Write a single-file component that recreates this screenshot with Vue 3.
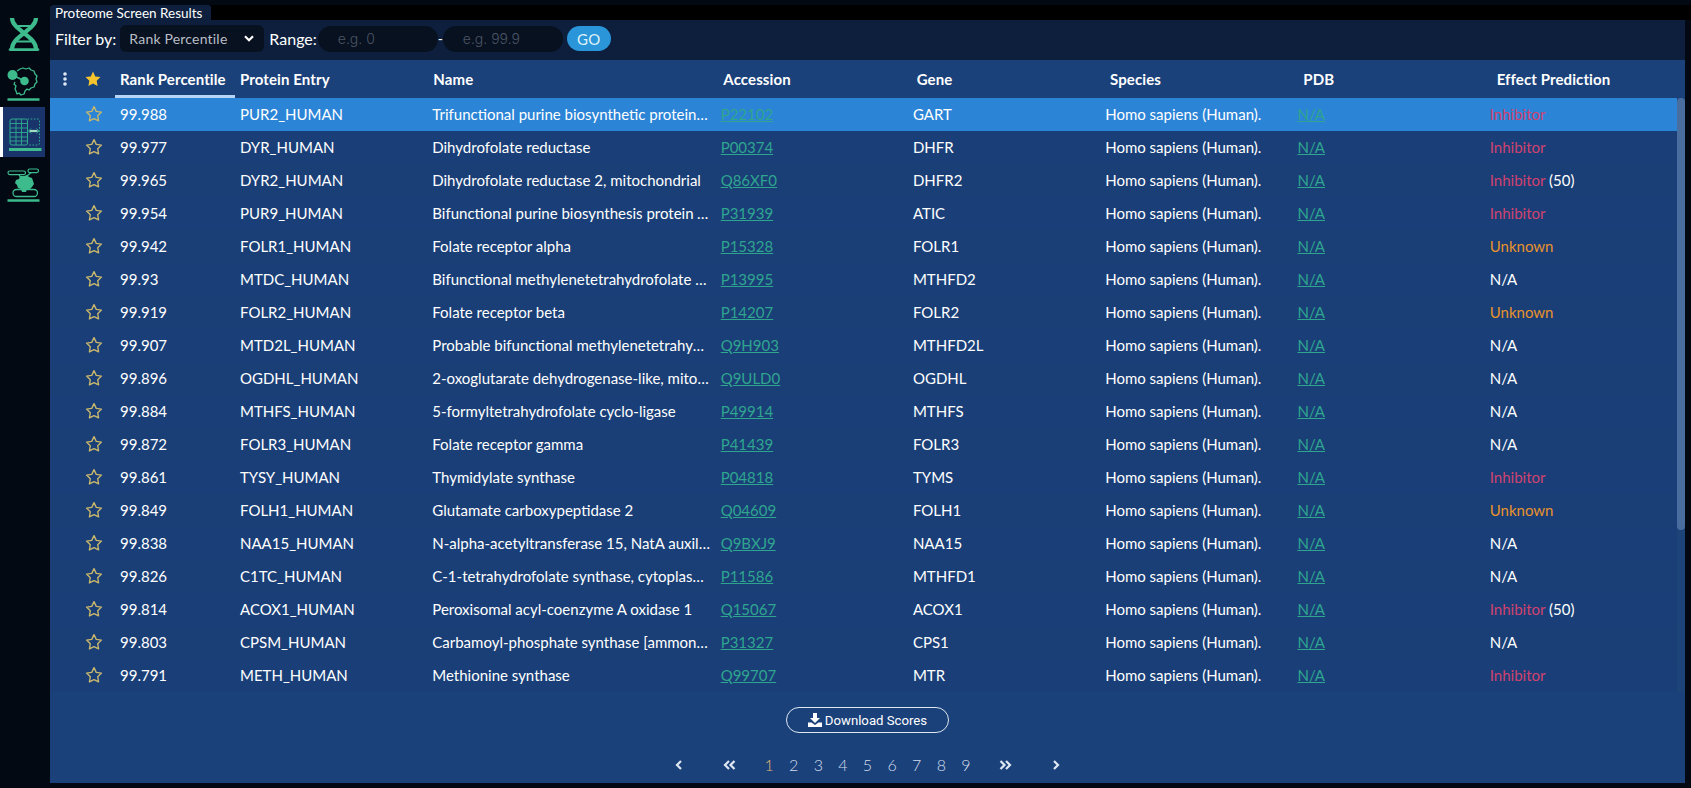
<script setup>
const rows = [
  ['99.988','PUR2_HUMAN','Trifunctional purine biosynthetic protein adenosine-3','P22102','GART','Inhibitor',''],
  ['99.977','DYR_HUMAN','Dihydrofolate reductase','P00374','DHFR','Inhibitor',''],
  ['99.965','DYR2_HUMAN','Dihydrofolate reductase 2, mitochondrial','Q86XF0','DHFR2','Inhibitor','(50)'],
  ['99.954','PUR9_HUMAN','Bifunctional purine biosynthesis protein ATIC','P31939','ATIC','Inhibitor',''],
  ['99.942','FOLR1_HUMAN','Folate receptor alpha','P15328','FOLR1','Unknown',''],
  ['99.93','MTDC_HUMAN','Bifunctional methylenetetrahydrofolate dehydrogenase','P13995','MTHFD2','N/A',''],
  ['99.919','FOLR2_HUMAN','Folate receptor beta','P14207','FOLR2','Unknown',''],
  ['99.907','MTD2L_HUMAN','Probable bifunctional methylenetetrahydrofolate dehydrogenase','Q9H903','MTHFD2L','N/A',''],
  ['99.896','OGDHL_HUMAN','2-oxoglutarate dehydrogenase-like, mitochondrial','Q9ULD0','OGDHL','N/A',''],
  ['99.884','MTHFS_HUMAN','5-formyltetrahydrofolate cyclo-ligase','P49914','MTHFS','N/A',''],
  ['99.872','FOLR3_HUMAN','Folate receptor gamma','P41439','FOLR3','N/A',''],
  ['99.861','TYSY_HUMAN','Thymidylate synthase','P04818','TYMS','Inhibitor',''],
  ['99.849','FOLH1_HUMAN','Glutamate carboxypeptidase 2','Q04609','FOLH1','Unknown',''],
  ['99.838','NAA15_HUMAN','N-alpha-acetyltransferase 15, NatA auxiliary subunit','Q9BXJ9','NAA15','N/A',''],
  ['99.826','C1TC_HUMAN','C-1-tetrahydrofolate synthase, cytoplasmic','P11586','MTHFD1','N/A',''],
  ['99.814','ACOX1_HUMAN','Peroxisomal acyl-coenzyme A oxidase 1','Q15067','ACOX1','Inhibitor','(50)'],
  ['99.803','CPSM_HUMAN','Carbamoyl-phosphate synthase [ammonia], mitochondrial','P31327','CPS1','N/A',''],
  ['99.791','METH_HUMAN','Methionine synthase','Q99707','MTR','Inhibitor',''],
]
const headers = ['Protein Entry','Name','Accession','Gene','Species','PDB','Effect Prediction']
const pages = [1,2,3,4,5,6,7,8,9]
const starPath = 'M10 1.8l2.5 5.3 5.8.8-4.2 4 1 5.8L10 15.1l-5.1 2.6 1-5.8-4.2-4 5.8-.8z'
const blob = 'M11 6l3-2 3-1 3 1 3-1 2 2 3 1 1 3 2 2-1 3 1 3-2 2-1 3-3 1-2 2-2-1-2 2-1 3-3 1-2-2-2 1-1-3-1-2 1-3-2-2 1-2'
const effectClass = e => e === 'Inhibitor' ? 'inhibitor' : e === 'Unknown' ? 'unknown' : ''
</script>

<template>
  <div class="app">
    <nav class="side">
      <div class="nav-item">
        <svg width="32" height="34" viewBox="0 0 32 34" fill="none" stroke="#3dbb8d">
          <path d="M4 1C4 13 28 19 28 32M28 1C28 13 4 19 4 32" stroke-width="4.2"/>
          <path d="M9 9h14M9 24.500h14" stroke-width="2.200"/>
          <path d="M2 32.600h28" stroke-width="2.600" stroke-linecap="round"/>
        </svg>
      </div>
      <div class="nav-item">
        <svg width="36" height="36" viewBox="0 0 36 36" fill="none" stroke="#3dbb8d" stroke-linejoin="round">
          <path :d="blob" stroke-width="1.3"/>
          <path d="M6.500 10l12 6" stroke-width="1.600"/>
          <circle cx="6.500" cy="10" r="5" fill="#3dbb8d" stroke="none"/>
          <circle cx="18.500" cy="16" r="4.300" fill="#3dbb8d" stroke="none"/>
          <path d="M1.500 34.500h32" stroke-width="2.600"/>
        </svg>
      </div>
      <div class="nav-item active">
        <svg width="34" height="38" viewBox="0 0 34 38" fill="none" stroke="#2fa98f">
          <rect x="1" y="6" width="17.500" height="26" rx="2" stroke-width="1"/>
          <path d="M1 10.500h17.500M1 15h17.500M1 19.500h17.500M1 24h17.500M1 28h17.500M7 6v26M12.500 6v26" stroke-width=".9"/>
          <path d="M18.500 6h10.500a1.500 1.500 0 0 1 1.500 1.500v23a1.500 1.500 0 0 1-1.500 1.500H18.500" stroke-width="1" stroke-dasharray="1.600 1.600"/>
          <path d="M20.500 18h8" stroke="#9fdcc4" stroke-width="2.200"/>
          <path d="M22 15.500L19.500 18l2.500 2.500M27.500 15.500L30 18l-2.500 2.500" stroke-width="1"/>
          <path d="M0 36.500h32.500" stroke="#3dbb8d" stroke-width="3"/>
        </svg>
      </div>
      <div class="nav-item">
        <svg width="36" height="36" viewBox="0 0 36 36" fill="none" stroke="#3dbb8d">
          <rect x="2" y="5" width="17.500" height="3.600" rx="1.800" stroke-width="1.200"/>
          <rect x="22" y="3" width="10.500" height="3.600" rx="1.800" stroke-width="1.200"/>
          <path d="M25 6.800l-5 4M13 8.800l2 3" stroke-width="1.200"/>
          <path d="M10 14l3-1 1-3 4 0 3-1 2 2 3 1 1 3 1 3-2 3-2 2-3 0-1 3-4 0-1-3-3-1-1-3-2-2z" fill="#3dbb8d" stroke="none"/>
          <rect x="7" y="23.500" width="24.500" height="7" rx="3.500" stroke-width="1.300"/>
          <path d="M1.500 34.500h32" stroke-width="2.600"/>
        </svg>
      </div>
    </nav>

    <main class="main">
      <div class="tabs"><div class="tab">Proteome Screen Results</div></div>
      <div class="filters">
        <span class="lbl">Filter by:</span>
        <div class="select">
          <span>Rank Percentile</span>
          <svg width="10" height="7" viewBox="0 0 10 7" fill="none" stroke="#fff" stroke-width="2.200"><path d="M1 1.200l4 4 4-4"/></svg>
        </div>
        <span class="lbl range">Range:</span>
        <div class="input">e.g. 0</div>
        <span class="dash">-</span>
        <div class="input">e.g. 99.9</div>
        <div class="go">GO</div>
      </div>

      <section class="panel">
        <div class="grid head">
          <div class="cell menu">
            <svg width="4" height="14" viewBox="0 0 4 14" fill="#dfe7f2"><circle cx="2" cy="2" r="1.800"/><circle cx="2" cy="7" r="1.800"/><circle cx="2" cy="12" r="1.800"/></svg>
            <svg class="star-h" width="18" height="18" viewBox="0 0 20 20" fill="#f6c52e"><path :d="starPath"/></svg>
          </div>
          <div class="cell sorted">Rank Percentile</div>
          <div v-for="h in headers" :key="h" class="cell">{{ h }}</div>
        </div>

        <div class="body">
          <div class="rows">
            <div v-for="(r, i) in rows" :key="r[1]" class="grid row" :class="{ sel: i === 0, alt: i % 2 === 0 }">
              <div class="cell starcell">
                <svg width="18" height="18" viewBox="0 0 20 20" fill="none" stroke="#c9b76c" stroke-width="1.500" stroke-linejoin="round"><path :d="starPath"/></svg>
              </div>
              <div class="cell">{{ r[0] }}</div>
              <div class="cell">{{ r[1] }}</div>
              <div class="cell">{{ r[2] }}</div>
              <div class="cell"><a class="link">{{ r[3] }}</a></div>
              <div class="cell">{{ r[4] }}</div>
              <div class="cell">Homo sapiens (Human).</div>
              <div class="cell"><a class="link">N/A</a></div>
              <div class="cell"><span :class="effectClass(r[5])">{{ r[5] }}</span>{{ r[6] ? ' ' + r[6] : '' }}</div>
            </div>
          </div>
          <div class="track"><div class="thumb"></div></div>
        </div>

        <div class="foot">
          <div class="download">
            <svg width="14" height="14" viewBox="0 0 14 14" fill="#fff"><path d="M5 0h4v5h3L7 10 2 5h3z"/><path d="M0 9.500h3.500L7 12l3.500-2.500H14V14H0z"/></svg>
            <span>Download Scores</span>
          </div>
          <div class="pager">
            <svg class="chev prev" width="8" height="10" viewBox="0 0 8 10" fill="none" stroke="#dfe7f2" stroke-width="2.200"><path d="M6 1L2 5l4 4"/></svg>
            <svg class="chev first" width="13" height="10" viewBox="0 0 13 10" fill="none" stroke="#dfe7f2" stroke-width="2.200"><path d="M6 1L2 5l4 4M11.500 1l-4 4 4 4"/></svg>
            <span v-for="p in pages" :key="p" class="page" :class="{ cur: p === 1 }">{{ p }}</span>
            <svg class="chev last" width="13" height="10" viewBox="0 0 13 10" fill="none" stroke="#dfe7f2" stroke-width="2.200"><path d="M1.500 1l4 4-4 4M7 1l4 4-4 4"/></svg>
            <svg class="chev next" width="8" height="10" viewBox="0 0 8 10" fill="none" stroke="#dfe7f2" stroke-width="2.200"><path d="M2 1l4 4-4 4"/></svg>
          </div>
        </div>
      </section>
    </main>
  </div>
</template>

<style scoped>
.app {
  display: flex;
  height: 788px;
  overflow: hidden;
  background: #030913;
  font-family: Lato, "Noto Sans", sans-serif;
  color: #fff;
}
.side {
  width: 50px;
  flex: none;
  display: flex;
  flex-direction: column;
  padding-top: 14px;
  box-sizing: border-box;
}
.nav-item {
  height: 40px;
  margin-bottom: 9px;
  display: flex;
  align-items: center;
  justify-content: center;
  padding-right: 3px;
}
.nav-item:nth-child(2) { margin-bottom: 4px; }
.nav-item.active {
  height: 50px;
  width: 45px;
  box-sizing: border-box;
  margin-bottom: 7px;
  padding: 0 0 0 3px;
  background: #18346a;
  border-left: 3px solid #fff;
}
.main {
  flex: 1;
  display: flex;
  flex-direction: column;
  padding: 5px 6px 5px 0;
  min-width: 0;
}
.tabs { height: 15px; background: #000; flex: none; margin-right: -6px; }
.tab {
  width: 161px;
  height: 15px;
  padding-left: 5px;
  box-sizing: border-box;
  background: #0e203d;
  font-size: 13.5px;
  line-height: 16px;
  white-space: nowrap;
  border-radius: 3px 3px 0 0;
}
.filters {
  height: 40px;
  flex: none;
  display: flex;
  align-items: center;
  padding: 0 0 3px 5px;
  box-sizing: border-box;
  background: #0d1f3c;
  font-size: 16px;
}
.lbl { white-space: nowrap; }
.select {
  width: 144px;
  height: 27px;
  margin-left: 4px;
  padding: 0 10px 0 9px;
  box-sizing: border-box;
  display: flex;
  align-items: center;
  justify-content: space-between;
  background: #08111f;
  border-radius: 6px;
  color: #b9bec6;
  font-size: 14px;
  letter-spacing: .2px;
}
.range { margin-left: 5px; }
.input {
  width: 120px;
  height: 26px;
  margin-left: 1px;
  padding-left: 20px;
  box-sizing: border-box;
  display: flex;
  align-items: center;
  background: #08111f;
  border-radius: 13px;
  color: #4b5565;
  font-size: 14px;
  font-family: Inter, Roboto, sans-serif;
  font-weight: 300;
}
.dash { margin: 0; width: 5px; font-size: 14px; }
.dash + .input { margin-left: 0; }
.go {
  width: 44px;
  height: 25px;
  margin-left: 4px;
  display: flex;
  align-items: center;
  justify-content: center;
  background: #2a95d8;
  border-radius: 13px;
  color: #dff1fb;
  font-size: 15px;
  letter-spacing: .3px;
}
.panel {
  flex: 1;
  display: flex;
  flex-direction: column;
  min-height: 0;
  background: #1a417a;
}
.grid {
  display: grid;
  grid-template-columns: 65px 120px 1fr 1.5fr 1fr 1fr 1fr 1fr 1fr;
  align-items: center;
}
.head { height: 38px; font-weight: 700; font-size: 15px; letter-spacing: .1px; }
.cell {
  padding: 0 5px;
  white-space: nowrap;
  overflow: hidden;
  text-overflow: ellipsis;
  min-width: 0;
}
.menu {
  display: flex;
  align-items: center;
  padding: 0 0 0 13px;
  gap: 17px;
  overflow: visible;
}
.star-h { flex: none; }
.sorted {
  height: 38px;
  line-height: 38px;
  box-sizing: border-box;
  border-bottom: 3px solid #b7d6f5;
}
.body { flex: none; display: flex; }
.rows { flex: 1; min-width: 0; }
.row { height: 33px; font-size: 15px; background: #1a3f78; }
.row .cell { padding-bottom: 2px; }
.row.alt { background: #1a3e76; }
.row.sel { background: #2b84d6; }
.row .starcell {
  display: flex;
  justify-content: flex-end;
  padding: 0 12px 2px 0;
}
.track { width: 8px; flex: none; background: #1c4479; }
.thumb { height: 432px; background: #4a6d9f; border-radius: 4px; }
.link { color: #2fa58f; text-decoration: underline; }
.inhibitor { color: #d0426f; }
.unknown { color: #e8932b; }
.foot {
  flex: 1;
  display: flex;
  flex-direction: column;
  align-items: center;
  padding-top: 15px;
}
.download {
  width: 163px;
  height: 26px;
  box-sizing: border-box;
  display: flex;
  align-items: center;
  justify-content: center;
  gap: 3px;
  border: 1px solid #dfe7f2;
  border-radius: 13px;
  font-family: Roboto, sans-serif;
  font-size: 13.2px;
}
.pager {
  margin-top: 22px;
  display: flex;
  align-items: center;
}
.chev { flex: none; }
.prev { margin-right: 40px; }
.first { margin-right: 21px; }
.last { margin-left: 21px; }
.next { margin-left: 40px; }
.page {
  width: 24.6px;
  text-align: center;
  font-size: 16px;
  font-weight: 300;
  color: #d3dcec;
}
.page.cur { color: #e0b872; }
</style>
